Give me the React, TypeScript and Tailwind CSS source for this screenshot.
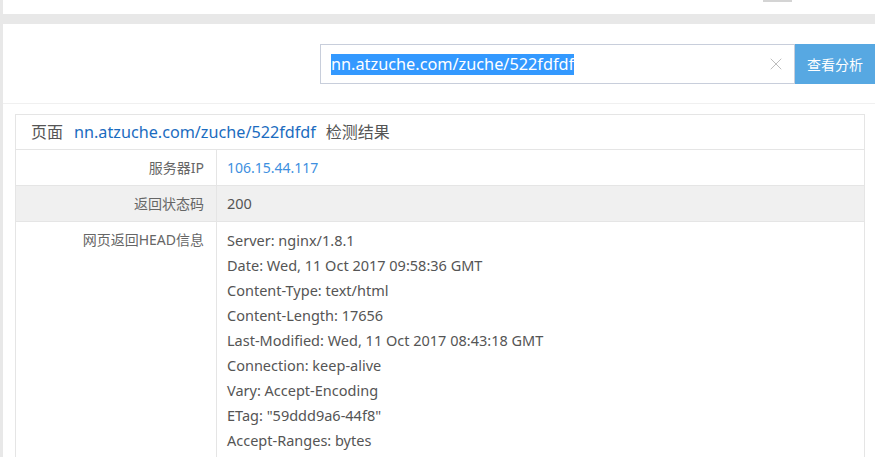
import React from 'react';
import { X } from 'lucide-react';

const headLines = [
  'Server: nginx/1.8.1',
  'Date: Wed, 11 Oct 2017 09:58:36 GMT',
  'Content-Type: text/html',
  'Content-Length: 17656',
  'Last-Modified: Wed, 11 Oct 2017 08:43:18 GMT',
  'Connection: keep-alive',
  'Vary: Accept-Encoding',
  'ETag: "59ddd9a6-44f8"',
  'Accept-Ranges: bytes',
];

const font = { fontFamily: '"Noto Sans", "Noto Sans CJK SC", sans-serif' };

export default function App() {
  return (
    <div className="h-[457px] w-[875px] overflow-hidden bg-[#e8e8e8] pl-[3px]" style={font}>
      {/* top bar */}
      <div className="flex h-[14px] items-start bg-white">
        <div className="ml-[760px] h-[2px] w-[29px] bg-[#d4d4d4]" />
      </div>
      <div className="mt-[10px] h-[500px] bg-white">
        {/* search */}
        <div className="flex h-[80px] items-start border-b border-[#f0f0f0] pt-[20px] pl-[317px]">
          <div className="flex h-[40px] w-[475px] items-center border border-[#c8cedb] bg-white pl-[10px] pr-[8px]">
            <span className="bg-[#3399ff] text-[16.3px] leading-[21px] text-white">nn.atzuche.com/zuche/522fdfdf</span>
            <X className="ml-auto h-[20px] w-[20px] text-[#b0b0b0]" strokeWidth={1} />
          </div>
          <button className="h-[40px] w-[80px] bg-[#57a8e2] text-[14px] text-white">查看分析</button>
        </div>
        {/* result table */}
        <div className="ml-[12px] mt-[10px] w-[850px] border border-[#e5e5e5]">
          <div className="flex h-[35px] items-center border-b border-[#e5e5e5] pl-[15px] text-[16px] text-[#555]">
            <span>页面</span>
            <span className="ml-[11px] text-[16.2px] text-[#1b6cc0]">nn.atzuche.com/zuche/522fdfdf</span>
            <span className="ml-[10px]">检测结果</span>
          </div>
          <div className="flex h-[36px] border-b border-[#e5e5e5]">
            <div className="flex w-[201px] shrink-0 items-center justify-end border-r border-[#e5e5e5] pr-[12px] text-[14px] text-[#666]">服务器IP</div>
            <div className="flex items-center pl-[10px] text-[14px] text-[#3d8fe0]">106.15.44.117</div>
          </div>
          <div className="flex h-[36px] border-b border-[#e5e5e5] bg-[#f0f0f0]">
            <div className="flex w-[201px] shrink-0 items-center justify-end border-r border-[#e5e5e5] pr-[12px] text-[14px] text-[#666]">返回状态码</div>
            <div className="flex items-center pl-[10px] text-[14.5px] text-[#555]">200</div>
          </div>
          <div className="flex">
            <div className="w-[201px] shrink-0 border-r border-[#e5e5e5] pt-[6px] pr-[12px] text-right text-[14px] leading-[24px] text-[#666]">网页返回HEAD信息</div>
            <div className="pt-[6px] pl-[10px] text-[14.5px] leading-[25px] text-[#555]">
              {headLines.map((l) => (
                <div key={l}>{l}</div>
              ))}
              <div>&nbsp;</div>
            </div>
          </div>
        </div>
      </div>
    </div>
  );
}
